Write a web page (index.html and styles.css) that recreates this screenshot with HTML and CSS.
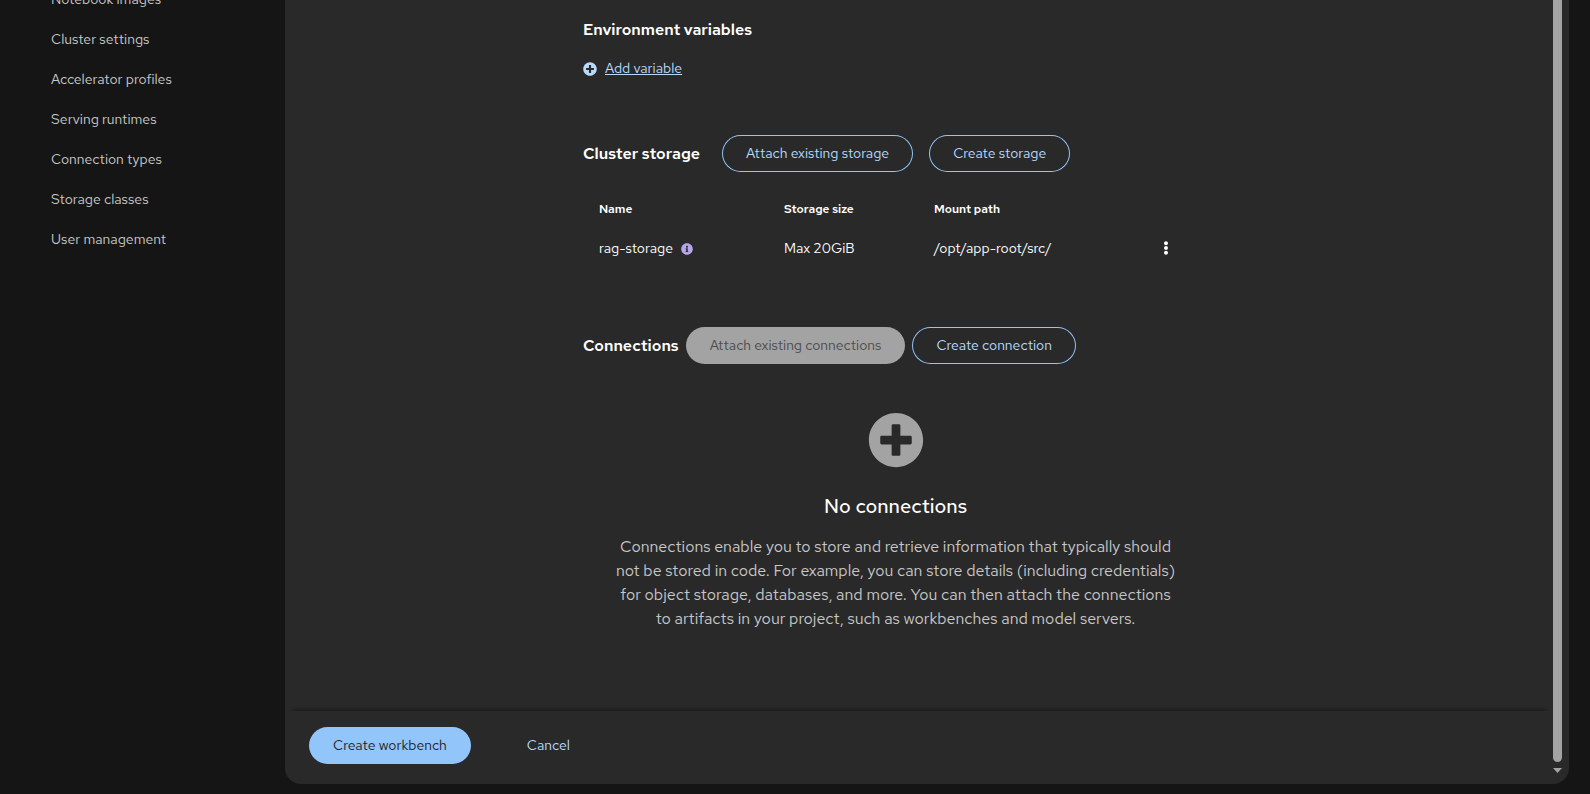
FILE: index.html
```html
<!DOCTYPE html>
<html lang="en">
<head>
<meta charset="utf-8">
<title>Create workbench</title>
<link rel="stylesheet" href="styles.css">
</head>
<body>
<div class="page">
  <nav class="sidebar" aria-label="Settings">
    <ul class="nav-list">
      <li><a class="nav-link" href="#">Notebook images</a></li>
      <li><a class="nav-link" href="#">Cluster settings</a></li>
      <li><a class="nav-link" href="#">Accelerator profiles</a></li>
      <li><a class="nav-link" href="#">Serving runtimes</a></li>
      <li><a class="nav-link" href="#">Connection types</a></li>
      <li><a class="nav-link" href="#">Storage classes</a></li>
      <li><a class="nav-link" href="#">User management</a></li>
    </ul>
  </nav>
  <main class="panel">
    <div class="panel-main">
      <div class="form-scroll">
        <div class="form">
          <section class="section">
            <h2 class="section-title">Environment variables</h2>
            <button class="add-link" type="button">
              <svg class="icon-small" viewBox="0 0 512 512" fill="currentColor" aria-hidden="true"><path d="M256 8C119 8 8 119 8 256s111 248 248 248 248-111 248-248S393 8 256 8zm144 276c0 6.600-5.400 12-12 12h-92v92c0 6.600-5.400 12-12 12h-56c-6.600 0-12-5.400-12-12v-92h-92c-6.600 0-12-5.400-12-12v-56c0-6.600 5.400-12 12-12h92v-92c0-6.600 5.400-12 12-12h56c6.600 0 12 5.400 12 12v92h92c6.600 0 12 5.400 12 12v56z"/></svg>
              <span class="add-text">Add variable</span>
            </button>
          </section>
          <section class="section">
            <div class="section-head section-head-wide">
              <h2 class="section-title">Cluster storage</h2>
              <div class="actions">
                <button class="btn btn-outline" type="button">Attach existing storage</button>
                <button class="btn btn-outline" type="button">Create storage</button>
              </div>
            </div>
            <table class="table">
              <thead>
                <tr><th class="col-name" scope="col">Name</th><th class="col-size" scope="col">Storage size</th><th scope="col">Mount path</th><td class="col-action"></td></tr>
              </thead>
              <tbody>
                <tr>
                  <td><span class="storage-name">rag-storage <svg class="icon-info" viewBox="0 0 512 512" fill="currentColor" aria-hidden="true"><path d="M256 8C119 8 8 119 8 256s111 248 248 248 248-111 248-248S393 8 256 8zm0 110c23 0 42 19 42 42s-19 42-42 42-42-19-42-42 19-42 42-42zm56 254c0 6.600-5.400 12-12 12h-88c-6.600 0-12-5.400-12-12v-24c0-6.600 5.400-12 12-12h12v-64h-12c-6.600 0-12-5.400-12-12v-24c0-6.600 5.400-12 12-12h64c6.600 0 12 5.400 12 12v100h12c6.600 0 12 5.400 12 12v24z"/></svg></span></td>
                  <td>Max 20GiB</td>
                  <td>/opt/app-root/src/</td>
                  <td class="col-action">
                    <button class="kebab" type="button" aria-label="Actions">
                      <svg class="icon-kebab" viewBox="0 0 192 512" fill="currentColor" aria-hidden="true"><path d="M96 184c39.800 0 72 32.200 72 72s-32.200 72-72 72-72-32.200-72-72 32.200-72 72-72zM24 80c0 39.800 32.200 72 72 72s72-32.200 72-72S135.800 8 96 8 24 40.200 24 80zm0 352c0 39.800 32.200 72 72 72s72-32.200 72-72-32.200-72-72-72-72 32.200-72 72z"/></svg>
                    </button>
                  </td>
                </tr>
              </tbody>
            </table>
          </section>
          <section class="section">
            <div class="section-head">
              <h2 class="section-title">Connections</h2>
              <button class="btn btn-disabled" type="button" disabled>Attach existing connections</button>
              <button class="btn btn-outline" type="button">Create connection</button>
            </div>
            <div class="empty">
              <svg class="icon-empty" viewBox="0 0 512 512" fill="currentColor" aria-hidden="true"><path d="M256 8C119 8 8 119 8 256s111 248 248 248 248-111 248-248S393 8 256 8zm144 276c0 6.600-5.400 12-12 12h-92v92c0 6.600-5.400 12-12 12h-56c-6.600 0-12-5.400-12-12v-92h-92c-6.600 0-12-5.400-12-12v-56c0-6.600 5.400-12 12-12h92v-92c0-6.600 5.400-12 12-12h56c6.600 0 12 5.400 12 12v92h92c6.600 0 12 5.400 12 12v56z"/></svg>
              <h3 class="empty-title">No connections</h3>
              <p class="empty-body">Connections enable you to store and retrieve information that typically should<br>not be stored in code. For example, you can store details (including credentials)<br>for object storage, databases, and more. You can then attach the connections<br>to artifacts in your project, such as workbenches and model servers.</p>
            </div>
          </section>
        </div>
      </div>
      <footer class="footer">
        <button class="btn btn-primary" type="button">Create workbench</button>
        <button class="btn btn-plain" type="button">Cancel</button>
      </footer>
    </div>
    <div class="scrollbar" aria-hidden="true">
      <div class="scroll-thumb"></div>
      <svg class="scroll-arrow" viewBox="0 0 9 5" fill="currentColor"><path d="M0 0h9L4.500 5z"/></svg>
    </div>
  </main>
</div>
</body>
</html>
```
FILE: styles.css
```css
* {
  box-sizing: border-box;
}

body {
  margin: 0;
  background: #151515;
  color: #fff;
  font-family: "Red Hat Text", Roboto, "Liberation Sans", sans-serif;
  font-size: 14px;
  line-height: 21px;
}

h2, h3, p, ul {
  margin: 0;
  padding: 0;
}

button {
  font: inherit;
  margin: 0;
  border: 0;
  background: none;
  cursor: pointer;
}

.page {
  display: flex;
  height: 100vh;
  padding: 0 21px 10px 0;
  overflow: hidden;
}

.sidebar {
  flex: 0 0 285px;
}

/* The list is scrolled up, with its first item partly out of view. */
.nav-list {
  margin-top: -20px;
  list-style: none;
}

.nav-link {
  display: block;
  padding: 9px 24px 10px 51px;
  color: #c7c7c7;
  text-decoration: none;
}

.panel {
  display: flex;
  flex: 1;
  min-width: 0;
  padding-right: 7px;
  background: #292929;
  border-radius: 0 0 16px 16px;
}

.panel-main {
  display: flex;
  flex: 1;
  flex-direction: column;
  min-width: 0;
  padding: 0 3px 0 4px;
}

.form-scroll {
  flex: 1;
  min-height: 0;
  overflow: hidden;
  padding: 18px 16px 0 294px;
}

.form {
  display: flex;
  flex-direction: column;
  gap: 56px;
  max-width: 625px;
}

.section-title {
  font-size: 16px;
  font-weight: 600;
  line-height: 24px;
}

.add-link {
  display: flex;
  align-items: center;
  gap: 8px;
  margin-top: 16px;
  padding: 0;
  color: #b9dafc;
}

.add-text {
  text-decoration: underline;
}

.icon-small {
  width: 14px;
  height: 14px;
}

.section-head {
  display: flex;
  align-items: center;
  gap: 7px;
}

.section-head-wide {
  gap: 22px;
}

.actions {
  display: flex;
  gap: 16px;
}

.btn {
  padding: 8px 24px;
  border-radius: 999px;
  white-space: nowrap;
}

.btn-outline {
  color: #b9dafc;
  box-shadow: inset 0 0 0 1px #92c5f9;
}

.btn-disabled {
  background: #a3a3a3;
  color: #4d4d4d;
}

.btn-primary {
  background: #92c5f9;
  color: #1f1f1f;
}

.btn-plain {
  color: #b9dafc;
}

.table {
  width: 100%;
  margin: 18px 0 3px;
  border-collapse: collapse;
  table-layout: fixed;
}

.table th,
.table td {
  padding: 9px 16px;
  text-align: left;
  font-weight: 400;
}

.table th {
  font-size: 12px;
  font-weight: 600;
}

.col-name {
  width: 185px;
}

.col-size {
  width: 150px;
}

.table .col-action {
  width: 84px;
  text-align: center;
}

.storage-name {
  display: flex;
  align-items: center;
  gap: 8px;
}

.icon-info {
  width: 12px;
  height: 12px;
  color: #b6a6e9;
}

.kebab {
  display: block;
  padding: 0 12px 2px;
  margin: 0 auto;
  color: #fff;
}

.icon-kebab {
  display: block;
  width: 6px;
  height: 14px;
}

.empty {
  display: flex;
  flex-direction: column;
  align-items: center;
  padding-top: 48px;
  text-align: center;
}

.icon-empty {
  width: 56px;
  height: 56px;
  color: #a3a3a3;
}

.empty-title {
  margin-top: 24px;
  font-size: 20px;
  font-weight: 500;
  line-height: 28px;
}

.empty-body {
  margin-top: 15px;
  color: #c7c7c7;
  font-size: 16px;
  line-height: 24px;
  white-space: nowrap;
}

.footer {
  display: flex;
  gap: 32px;
  padding: 16px 20px 20px;
  box-shadow: 0 -5px 4px -4px rgba(0, 0, 0, 0.45);
}

.scrollbar {
  display: flex;
  flex-direction: column;
  width: 9px;
  padding-bottom: 11px;
  color: #a3a3a3;
}

.scroll-thumb {
  flex: 1;
  background: currentColor;
  border-radius: 0 0 5px 5px;
}

.scroll-arrow {
  display: block;
  width: 9px;
  height: 5px;
  margin-top: 6px;
}
```
